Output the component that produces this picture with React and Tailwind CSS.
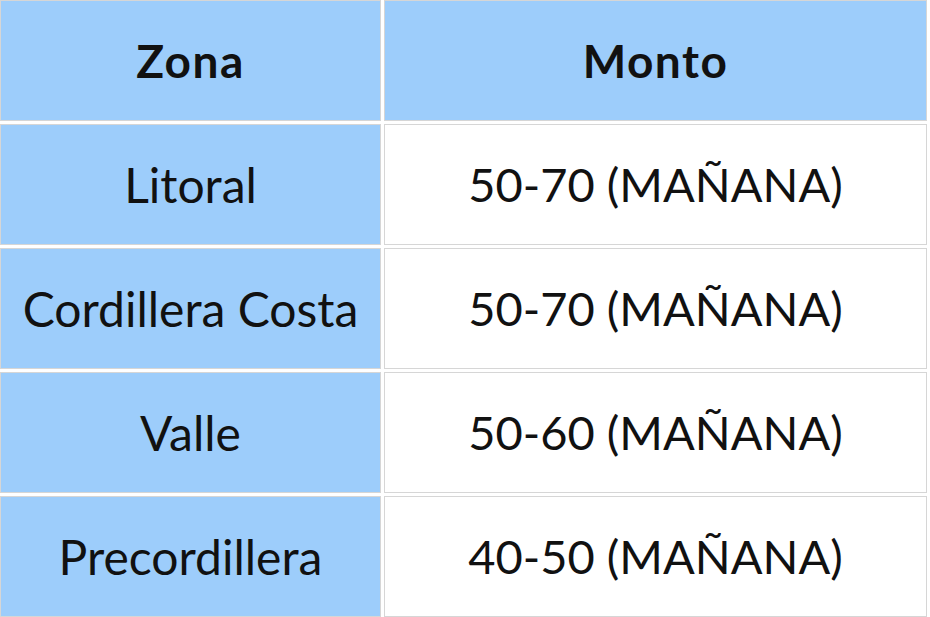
import React from "react";

const rows = [
  { zona: "Litoral", monto: "50-70 (MAÑANA)" },
  { zona: "Cordillera Costa", monto: "50-70 (MAÑANA)" },
  { zona: "Valle", monto: "50-60 (MAÑANA)" },
  { zona: "Precordillera", monto: "40-50 (MAÑANA)" },
];

const App = () => {
  return (
    <div className="w-[930px] h-[617px] bg-white overflow-hidden">
      <div
        className="grid grid-cols-[381px_543px] auto-rows-[121px] gap-[3px] text-[#111]"
        style={{ fontFamily: '"Lato", "Noto Sans", sans-serif' }}
      >
        {/* Header */}
        <div className="bg-[#9dcdfb] border border-[#d6d6d6] flex items-center justify-center text-[46px] font-bold tracking-[1.5px]">
          Zona
        </div>
        <div className="bg-[#9dcdfb] border border-[#d6d6d6] flex items-center justify-center text-[46px] font-bold tracking-[1.5px]">
          Monto
        </div>

        {rows.map((r) => (
          <React.Fragment key={r.zona}>
            <div className="bg-[#9dcdfb] border border-[#d6d6d6] flex items-center justify-center text-[48px]">
              {r.zona}
            </div>
            <div className="bg-white border border-[#d6d6d6] flex items-center justify-center text-[47px]">
              {r.monto}
            </div>
          </React.Fragment>
        ))}
      </div>
    </div>
  );
};

export default App;
